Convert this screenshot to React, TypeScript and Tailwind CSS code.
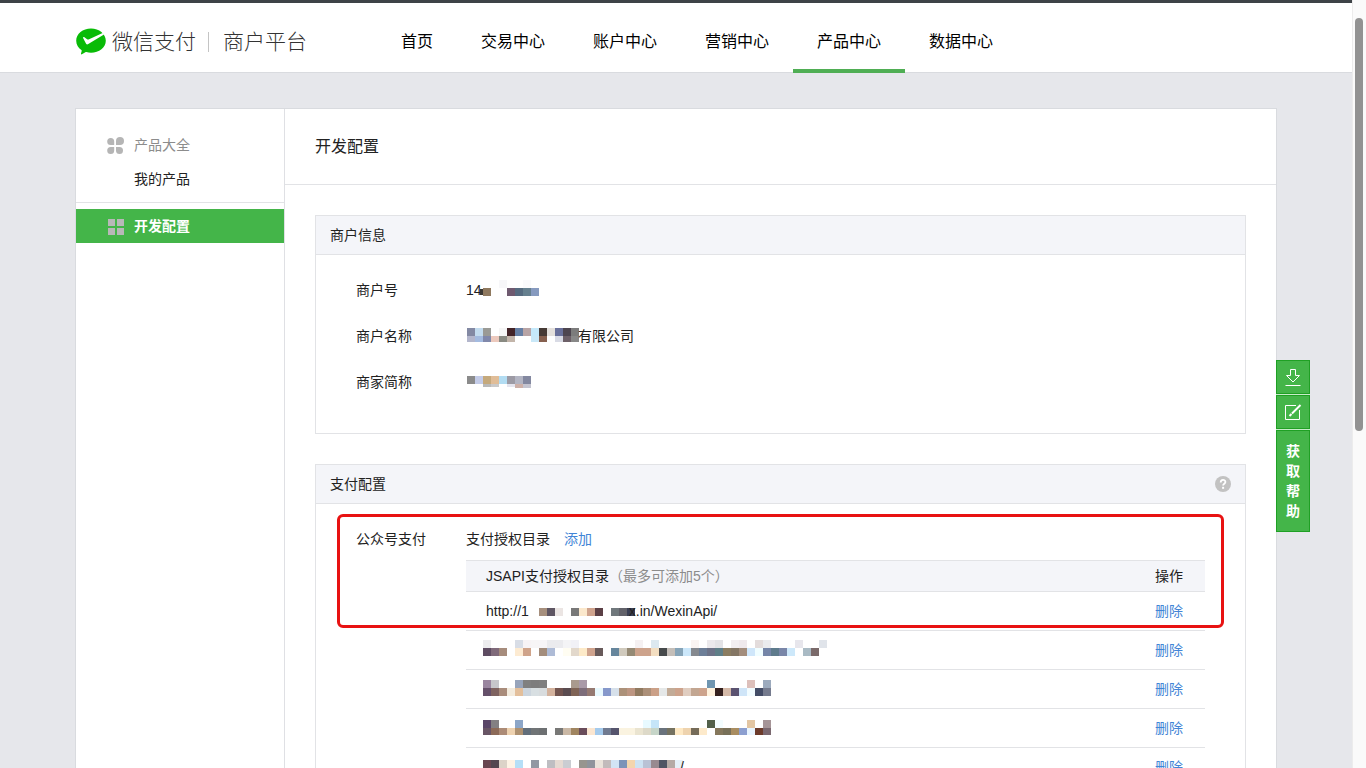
import React from 'react';

type MosaicLine = {
  x: number;
  y: number;
  h?: number;
  colors: string;
};

const navItems = [
  { label: '首页', active: false },
  { label: '交易中心', active: false },
  { label: '账户中心', active: false },
  { label: '营销中心', active: false },
  { label: '产品中心', active: true },
  { label: '数据中心', active: false }
];

// Colours are listed cell by cell, "-" leaves a cell empty
const Mosaic: React.FC<{ width: number; lines: MosaicLine[] }> = ({ width, lines }) => (
  <svg width={width} height="20" className="shrink-0 overflow-visible" shapeRendering="crispEdges" aria-hidden="true">
    {lines.map((line, i) =>
      line.colors.split(' ').map((color, j) =>
        color === '-' ? null : (
          <rect key={`${i}-${j}`} x={line.x + j * 8} y={line.y} width="8" height={line.h ?? 8} fill={`#${color}`} />
        )
      )
    )}
  </svg>
);

const merchantInfo = [
  {
    label: '商户号',
    before: '14',
    after: '',
    width: 60,
    lines: [
      { x: -2, y: 9, h: 6, colors: '3a3733' },
      { x: -7, y: 8, colors: '- 8f795f - - 6f5a70 566b80 66808f 869abf' },
      { x: 17, y: 0, colors: 'f7f7f9 - - fafafc' }
    ]
  },
  {
    label: '商户名称',
    before: '',
    after: '有限公司',
    width: 112,
    lines: [
      { x: 1, y: 2, colors: '8389a3 c3dcef 9a9a95 - f5f5f5 432327 667fa4 b8a4a5 c5e9fb 463a35 e4e0dc 69709a 4d454f 7c7c7c' },
      { x: 1, y: 10, h: 6, colors: 'b3b6cc a4bbe0 8088aa ecc9bd 898a82 c3b5aa - - c9e8f8 86604f - d9dbe5 6d6068 888888' }
    ]
  },
  {
    label: '商家简称',
    before: '',
    after: '',
    width: 70,
    lines: [
      { x: 1, y: 4, colors: '8b8b8b c4cce8 c5a97c e0bd98 b2dcf2 9c9aa4 b3b5c3 8388a0' },
      { x: 17, y: 12, h: 3, colors: 'b9b9b9 c9c9c9 - e4e4ee' },
      { x: 49, y: 12, h: 4, colors: 'cdb0a8 c4c4d0' }
    ]
  }
];

const directories = [
  {
    before: 'http://1',
    after: 'x.in/WexinApi/',
    width: 100,
    lines: [{ x: 10, y: 7, colors: 'a68f7d 5e5562 ebe5e3 - 787878 fbe8cc cfa38d 5b3f45 - 70787c 62626a 3a3f55' }]
  },
  {
    before: '',
    after: '',
    width: 340,
    lines: [
      {
        x: -3,
        y: 0,
        colors:
          'ececee - - - d8dde6 f7f3f5 f7f5f6 f7f5f7 ebebee ebebee f4f4f6 f1f1f6 - - - - - - - f5f1f2 - dce8ef - - - - faf4f2 - ebe9ec e3e3e6 - f2eef0 efe9ec - e3dcdc ebebee - - - e7e6ec - - e0e4ea'
      },
      {
        x: -3,
        y: 8,
        colors:
          '5e4c62 7f6a7a a68c7c - fdebd2 cfa38a - a38d7c aebbd6 - fffdf2 e2d8cb fdeac8 cfa38d 685a5a - 66869c d0cabd 958a75 cda38c cda38c f3dec1 464a4b c4beb8 86a4b8 cbe7fa 85898f 6d7f98 6d7388 5f7f88 8b7d61 847664 a38d7c cfe6fa f0fdff 7585a8 5e7b8c 7986a8 cde8fa - a9bac4 7a6a6a'
      }
    ]
  },
  {
    before: '',
    after: '',
    width: 286,
    lines: [
      {
        x: -3,
        y: 1,
        colors:
          '9a86a0 c7c7cb - - 97a4bb 808080 7d7d7d 7f7f7f - - - a99a8e a99aa8 - - - - - - - - - - - - - - - 7096b1 - - - - ddc0bb - 9caabd'
      },
      {
        x: -3,
        y: 9,
        colors:
          '65506a 7f6360 a98c7b f3ebdd e3bf9b ccd5de d8dfe2 d8dcde d3b29d 72544f 5a4c50 7f6355 7d6d7a 957971 e8f8fd 8698cb d6e0ea ac9179 bd9682 917a60 ac9079 cba087 e5e8e8 c2ab97 cda38c e0cdc0 c2a691 cda38c fff2dd 35211f d4b9a8 5a5270 cfe5f8 f2fcff 434c66 757b8e'
      }
    ]
  },
  {
    before: '',
    after: '',
    width: 286,
    lines: [
      {
        x: -3,
        y: 2,
        colors:
          '5a4668 838083 - - 8ca6c8 - - - - - - - - - - - - - - - e8faff c5e5f8 - - - - - - 52604a f3fdff - - - e3c6a3 - a69598'
      },
      {
        x: -3,
        y: 10,
        h: 7,
        colors:
          '685565 8c6a58 ac8b76 eed2b0 ae9170 626e7a 707476 6d7072 - 787876 cab8a5 a08560 694c5a fbe6d0 a4caec 707a90 55546d faf3e0 faf3e0 eae4d0 ddd9c8 c6d5c8 69727c 757260 fee9c4 eed3ae 756b58 fdeacb - 85775c 787058 a98d60 8c9fd0 e9f5ff 6c3b2b 7a6870'
      }
    ]
  },
  {
    before: '',
    after: '/',
    width: 194,
    lines: [
      {
        x: -3,
        y: 3,
        colors:
          '694550 534650 dcd3c8 fdf3e5 b5dff7 - 9298a3 - bebec2 e5dad2 cacdd2 - 98958f 90949c eae3da c2bbbb d2e4f5 7c93b8 f3d5ad cde2f2 b9c2d5 988a90 505564 b5aaa5 e5f0f8'
      }
    ]
  }
];

const Header: React.FC = () => (
  <header className="border-t-3 border-b border-t-[#3e4347] border-b-[#d9dbdf] bg-white">
    <div className="mx-auto flex h-[69px] max-w-[1202px] items-start">
      <a href="#" className="flex h-[69px] w-[302px] shrink-0 items-center pt-2 pl-px text-[21px] font-light text-[#333]">
        <svg width="30" height="27" viewBox="0 0 30 27" className="mr-1.5 shrink-0" aria-hidden="true">
          <path
            d="M15 0.5C6.8 0.5 0.2 5.9 0.2 12.7c0 3.8 2 7.1 5.2 9.3 .3 .2 .4 .6 .3 1l-.7 2.6c-.1 .7 .3 1 .8 .6l3.6-2c.3-.2 .7-.2 1-.1 1.5 .4 3 .6 4.6 .6 8.2 0 14.8-5.3 14.8-12S23.200.5 15 0.500z"
            fill="#09bb07"
          />
          <path
            d="M28 6.400L12.300 16.100c-.8 .5-1.700 .6-2.200-.4L7.200 10.300c-.4-.9 .4-1.500 1.200-1l2.700 1.900c.7 .4 1.300 .4 2 .1L26.600 4.900z"
            fill="#fff"
          />
        </svg>
        <span>微信支付</span>
        <span className="mr-3.5 ml-3 h-5 w-px bg-[#c4c4c4]" />
        <span>商户平台</span>
      </a>
      <nav className="flex">
        {navItems.map((item) => (
          <a
            key={item.label}
            href="#"
            className={`flex h-[70px] items-center border-b-4 px-6 pt-3 text-base text-black ${
              item.active ? 'border-[#4fae54]' : 'border-transparent'
            }`}
          >
            {item.label}
          </a>
        ))}
      </nav>
    </div>
  </header>
);

const Sidebar: React.FC = () => (
  <aside className="w-[209px] shrink-0 border-r border-[#dfe0e4] pt-[19px] text-sm">
    <div className="mb-1.5 border-b border-[#e2e3e6] pb-1.5">
      <div className="flex h-[34px] items-center gap-2.5 pl-[31px] text-[#8c8c8c]">
        <svg width="17" height="17" viewBox="0 0 17 17" fill="#b5b5b5" aria-hidden="true">
          <path d="M3.700 1A3.500 3.500 0 1 0 3.700 8H7.200V4.500A3.500 3.500 0 0 0 3.700 1z" />
          <path d="M9 8V4A4 4 0 1 1 13 8z" />
          <path d="M3.700 10H7.200V13.500A3.500 3.500 0 1 1 3.700 10z" />
          <path d="M9 10H12.500A3.500 3.500 0 1 1 9 13.500z" />
        </svg>
        产品大全
      </div>
      <a href="#" className="flex h-[34px] items-center pl-[58px] text-[#222]">
        我的产品
      </a>
    </div>
    <a href="#" className="flex h-[34px] items-center gap-2.5 bg-[#44b549] pl-[31px] font-bold text-white">
      <svg width="17" height="17" viewBox="0 0 17 17" fill="#b8b8b8" aria-hidden="true">
        <path d="M1 1h7v7H1zM10 1h7v7h-7zM1 10h7v7H1zM10 10h7v7h-7z" />
      </svg>
      开发配置
    </a>
  </aside>
);

const PanelTitle: React.FC<{ title: string; children?: React.ReactNode }> = ({ title, children }) => (
  <div className="flex h-[39px] items-center justify-between border-b border-[#e2e3e6] bg-[#f4f5f9] px-3.5">
    <h3>{title}</h3>
    {children}
  </div>
);

const MerchantPanel: React.FC = () => (
  <section className="border border-[#e2e3e6]">
    <PanelTitle title="商户信息" />
    <dl className="px-10 pt-3 pb-7">
      {merchantInfo.map((row) => (
        <div key={row.label} className="flex h-[46px] items-center">
          <dt className="w-[110px] shrink-0">{row.label}</dt>
          <dd className="flex items-center">
            {row.before}
            <Mosaic width={row.width} lines={row.lines} />
            {row.after}
          </dd>
        </div>
      ))}
    </dl>
  </section>
);

const PaymentPanel: React.FC = () => (
  <section className="mt-[30px] border border-[#e2e3e6]">
    <PanelTitle title="支付配置">
      <button type="button" aria-label="帮助">
        <svg width="16" height="16" viewBox="0 0 16 16" aria-hidden="true">
          <circle cx="8" cy="8" r="8" fill="#c2c2c2" />
          <path d="M5.700 6.400C5.700 3 10.400 3.200 10.400 6C10.400 7.800 8.100 7.700 8.100 9.600" fill="none" stroke="#fff" strokeWidth="1.800" />
          <path d="M7.100 10.800h2v2h-2z" fill="#fff" />
        </svg>
      </button>
    </PanelTitle>
    <div className="relative flex pt-6 pr-10 pb-10 pl-10">
      <div className="w-[110px] shrink-0 leading-[22px]">公众号支付</div>
      <div className="flex-1">
        <div className="flex gap-3.5 leading-[22px]">
          <span>支付授权目录</span>
          <a href="#" className="text-[#4285d6]">
            添加
          </a>
        </div>
        <table className="mt-2.5 w-full table-fixed border-separate border-spacing-0 text-left">
          <thead>
            <tr className="bg-[#f4f5f9]">
              <th className="h-8 border-y border-[#e2e3e6] p-0 pl-5 font-normal">
                JSAPI支付授权目录<span className="text-[#8c8c8c]">（最多可添加5个）</span>
              </th>
              <th className="w-[70px] border-y border-[#e2e3e6] p-0 pl-5 font-normal">操作</th>
            </tr>
          </thead>
          <tbody>
            {directories.map((row, i) => (
              <tr key={i}>
                <td className="h-[39px] border-b border-[#e2e3e6] p-0 pl-5">
                  <div className="flex items-center">
                    {row.before}
                    <Mosaic width={row.width} lines={row.lines} />
                    {row.after}
                  </div>
                </td>
                <td className="border-b border-[#e2e3e6] p-0 pl-5">
                  <a href="#" className="text-[#4285d6]">
                    删除
                  </a>
                </td>
              </tr>
            ))}
          </tbody>
        </table>
      </div>
      <div className="pointer-events-none absolute inset-x-[21px] top-2.5 h-[114px] rounded-md border-3 border-[#e81212]" />
    </div>
  </section>
);

const SideTools: React.FC = () => (
  <div className="absolute top-[251px] left-full flex w-[34px] flex-col gap-px bg-[#c9ecca] text-sm text-white">
    <button type="button" aria-label="下载" className="flex h-[34px] items-center justify-center border border-[#1fa024] bg-[#44b549]">
      <svg width="18" height="20" viewBox="0 0 18 20" fill="none" stroke="#fff" aria-hidden="true">
        <path d="M6.500 2.500h5v6h4L9 15 2.500 8.500h4zM1.500 18.500h15" />
      </svg>
    </button>
    <button type="button" aria-label="反馈" className="flex h-[34px] items-center justify-center border border-[#1fa024] bg-[#44b549]">
      <svg width="18" height="20" viewBox="0 0 18 20" fill="none" stroke="#fff" aria-hidden="true">
        <path d="M12 3.500H1.500v14h14V8" />
        <path d="M16.500 3L8 11.500" strokeWidth="2" />
        <path d="M7.500 12L5.500 14" strokeWidth="2" />
      </svg>
    </button>
    <button
      type="button"
      className="flex h-[102px] items-center justify-center border border-[#1fa024] bg-[#44b549] px-2 leading-5 font-bold"
    >
      <span className="w-3.5 break-all">获取帮助</span>
    </button>
  </div>
);

const App: React.FC = () => {
  return (
    <div className="flex h-screen overflow-hidden bg-[#e6e7eb] font-['Liberation_Sans','Noto_Sans_CJK_SC',sans-serif] text-[#222]">
      <div className="min-w-0 flex-1">
        <Header />
        <div className="relative mx-auto mt-[35px] flex max-w-[1202px] border border-[#d9dbdf] bg-white">
          <Sidebar />
          <main className="min-w-0 flex-1 text-sm">
            <h2 className="flex h-[76px] items-center border-b border-[#e2e3e6] pl-[30px] text-base">开发配置</h2>
            <div className="p-[30px]">
              <MerchantPanel />
              <PaymentPanel />
            </div>
          </main>
          <SideTools />
        </div>
      </div>
      <div className="w-3.5 shrink-0 border-l border-[#ececec] bg-[#fafafa] pt-[18px] pl-0.5">
        <div className="h-[413px] w-2 rounded-full bg-[#929292]" />
      </div>
    </div>
  );
};

export default App;
